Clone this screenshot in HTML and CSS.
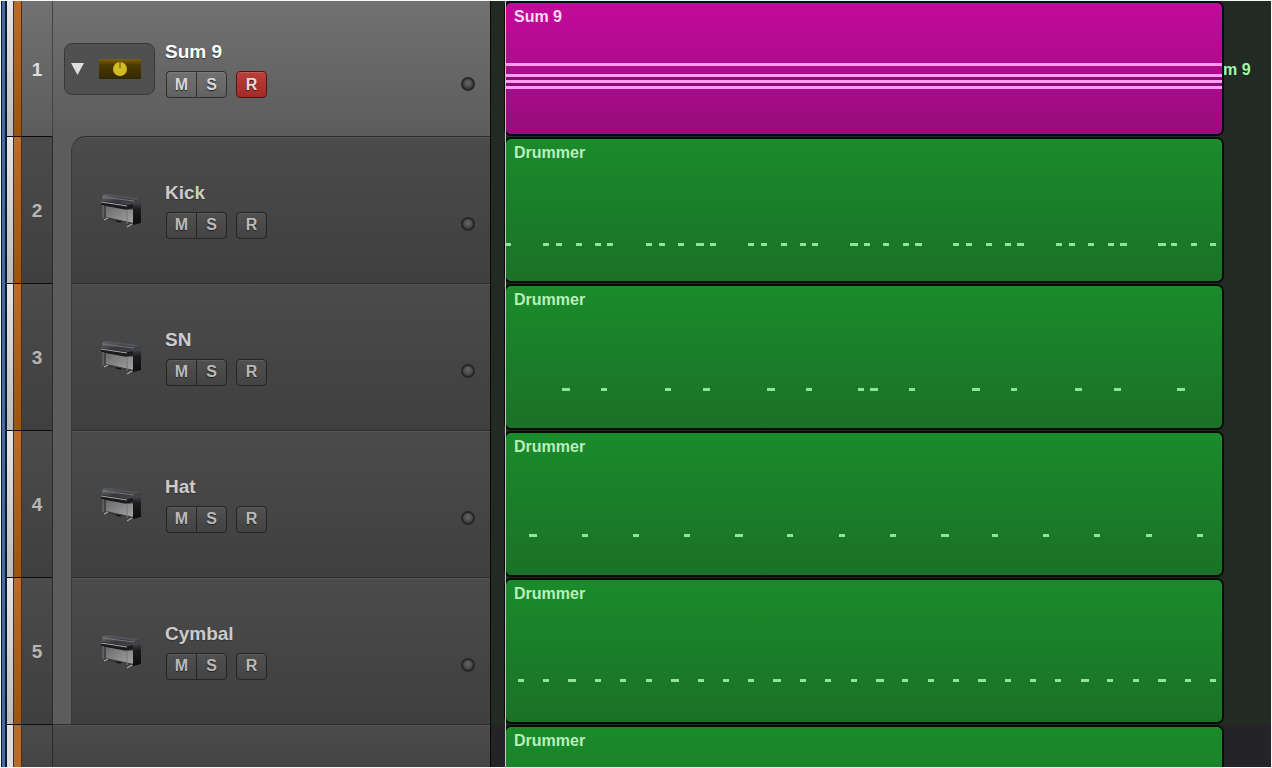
FILE: index.html
```html
<!DOCTYPE html>
<html lang="en">
<head>
<meta charset="utf-8">
<title>Tracks</title>
<link rel="stylesheet" href="styles.css">
</head>
<body>
<svg class="defs" aria-hidden="true">
  <defs>
    <linearGradient id="panel" x1="0" y1="0" x2="1" y2="1">
      <stop offset="0" stop-color="#6a6a6c"/><stop offset="1" stop-color="#a8a8a8"/>
    </linearGradient>
    <linearGradient id="lid" x1="0" y1="0" x2="1" y2="1">
      <stop offset="0" stop-color="#77787c"/><stop offset=".5" stop-color="#36373a"/><stop offset="1" stop-color="#4a4b50"/>
    </linearGradient>
    <linearGradient id="side" x1="0" y1="0" x2="0" y2="1">
      <stop offset="0" stop-color="#4a4b52"/><stop offset=".35" stop-color="#1c1c1f"/><stop offset="1" stop-color="#0c0c0d"/>
    </linearGradient>
    <symbol id="piano" viewBox="0 0 44 36">
      <path d="M7 13L35 17V32L7 25Z" fill="url(#panel)"/>
      <path d="M7 24L35 30V32L7 26Z" fill="#39393b"/>
      <path d="M34 12L42 8V30L34 32Z" fill="url(#side)"/>
      <path d="M4 2L8 1L42 5V9L34 12L3 8Z" fill="url(#lid)"/>
      <path d="M4 2L8 1L42 5L36 7Z" fill="#515259"/>
      <path d="M3 4L35 8" stroke="#74757b" stroke-width="1"/>
      <path d="M2 8L29 12L34 11V15L28 17L2 12Z" fill="#1b1b1d"/>
      <path d="M2 9L28 13" stroke="#a9a9ab" stroke-width="1"/>
      <path d="M4 12V25M28 16V31" stroke="#777779" stroke-width="1"/>
      <path d="M5 27L9 25M28 34L33 31" stroke="#a4a4a4" stroke-width="1.2"/>
      <path d="M17 28L22 29" stroke="#151515" stroke-width="1.5"/>
    </symbol>
  </defs>
</svg>
<main class="window">
  <div class="edge"></div>
  <div class="tracks">

    <section class="track track-sum">
      <div class="header">
        <i class="mark"></i><i class="colour"></i><span class="number">1</span>
        <div class="body">
          <div class="stack">
            <button class="disclose" aria-label="Collapse stack"><svg width="13" height="12" viewBox="0 0 13 12"><path d="M0 0H13L6.500 12Z" fill="#dedede"/></svg></button>
            <svg width="42" height="20" viewBox="0 0 42 20"><defs><linearGradient id="amber" x1="0" y1="0" x2="0" y2="1"><stop offset="0" stop-color="#806000"/><stop offset=".3" stop-color="#4c3a00"/><stop offset="1" stop-color="#352900"/></linearGradient></defs><rect width="42" height="20" fill="url(#amber)"/><circle cx="21" cy="10" r="7" fill="#d3bc22"/><path d="M21 3V9" stroke="#5d4a00" stroke-width="1"/></svg>
          </div>
          <div class="info">
            <div class="name">Sum 9</div>
            <div class="controls"><span class="pair"><button>M</button><button>S</button></span><button class="rec armed">R</button><i class="led"></i></div>
          </div>
        </div>
      </div>
      <div class="lane">
        <div class="region magenta"><svg class="notes" viewBox="0 0 716 131" preserveAspectRatio="none"><rect y="73" width="716" height="12" fill="#8c0b74"/><path d="M0 61.5H716M0 72.5H716M0 78.5H716M0 84.5H716" stroke="#ff9df0" stroke-width="3"/></svg><span class="label">Sum 9</span></div>
        <div class="tail">m 9</div>
      </div>
    </section>

    <section class="track child first">
      <div class="header">
        <i class="mark"></i><i class="colour"></i><span class="number">2</span>
        <div class="body">
          <div class="instrument"><svg width="44" height="36"><use href="#piano"/></svg></div>
          <div class="info">
            <div class="name">Kick</div>
            <div class="controls"><span class="pair"><button>M</button><button>S</button></span><button class="rec">R</button><i class="led"></i></div>
          </div>
        </div>
      </div>
      <div class="lane">
        <div class="region"><svg class="notes" viewBox="0 0 716 142" preserveAspectRatio="none" data-y="104" data-notes="0:5 37 50 70 89 101 140 153 172 190:8 204 242 255 275 294 306 344:8 358 377 397 409:7 447 460 480 499 511:7 550 563 582 602 614:7 652:8 665 685 704"></svg><span class="label">Drummer</span></div>
        <div class="tail"></div>
      </div>
    </section>

    <section class="track child">
      <div class="header">
        <i class="mark"></i><i class="colour"></i><span class="number">3</span>
        <div class="body">
          <div class="instrument"><svg width="44" height="36"><use href="#piano"/></svg></div>
          <div class="info">
            <div class="name">SN</div>
            <div class="controls"><span class="pair"><button>M</button><button>S</button></span><button class="rec">R</button><i class="led"></i></div>
          </div>
        </div>
      </div>
      <div class="lane">
        <div class="region"><svg class="notes" viewBox="0 0 716 142" preserveAspectRatio="none" data-y="102" data-notes="56:8 95 159 197:7 261:8 300 352 364:8 403 466:8 505 569:7 608:7 671:8"></svg><span class="label">Drummer</span></div>
        <div class="tail"></div>
      </div>
    </section>

    <section class="track child">
      <div class="header">
        <i class="mark"></i><i class="colour"></i><span class="number">4</span>
        <div class="body">
          <div class="instrument"><svg width="44" height="36"><use href="#piano"/></svg></div>
          <div class="info">
            <div class="name">Hat</div>
            <div class="controls"><span class="pair"><button>M</button><button>S</button></span><button class="rec">R</button><i class="led"></i></div>
          </div>
        </div>
      </div>
      <div class="lane">
        <div class="region"><svg class="notes" viewBox="0 0 716 142" preserveAspectRatio="none" data-y="101" data-notes="23:8 76 127 178 229:8 281 333 384 435:8 486 537 588 640 691"></svg><span class="label">Drummer</span></div>
        <div class="tail"></div>
      </div>
    </section>

    <section class="track child">
      <div class="header">
        <i class="mark"></i><i class="colour"></i><span class="number">5</span>
        <div class="body">
          <div class="instrument"><svg width="44" height="36"><use href="#piano"/></svg></div>
          <div class="info">
            <div class="name">Cymbal</div>
            <div class="controls"><span class="pair"><button>M</button><button>S</button></span><button class="rec">R</button><i class="led"></i></div>
          </div>
        </div>
      </div>
      <div class="lane">
        <div class="region"><svg class="notes" viewBox="0 0 716 142" preserveAspectRatio="none" data-y="99" data-notes="12 37 62:8 89 114 140 165:8 192 217 242 267:8 294 319 345 370:8 396 422 447 472:8 499 524 549 575:8 601 627 652:8 679 704"></svg><span class="label">Drummer</span></div>
        <div class="tail"></div>
      </div>
    </section>

    <section class="track partial">
      <div class="header">
        <i class="mark"></i><i class="colour"></i><span class="number"></span>
        <div class="body"></div>
      </div>
      <div class="lane">
        <div class="region"><span class="label">Drummer</span></div>
        <div class="tail"></div>
      </div>
    </section>

  </div>
</main>
<script src="notes.js"></script>
</body>
</html>
```

FILE: styles.css
```css
* { box-sizing: border-box; }

body {
  margin: 0;
  background: #fff;
  font-family: "Liberation Sans", Arial, sans-serif;
  font-weight: bold;
}

.defs { position: absolute; width: 0; height: 0; }

.window {
  display: flex;
  min-height: 100vh;
  border: 1px solid #f4f6f8;
  background: #212b24;
}

.edge {
  width: 6px;
  background: #466c9f;
  border: solid #0d1a33;
  border-width: 0 2px 0 1px;
}

.tracks { flex: 1; display: flex; flex-direction: column; min-width: 0; }

.track { display: flex; min-height: 147px; }
.track-sum { min-height: 136px; }
.partial { flex: 1; min-height: 42px; }

/* Track header */
.header {
  display: flex;
  width: 484px;
  flex: none;
  border-right: 1px solid #080808;
  background: linear-gradient(#4b4b4b, #3f3f3f);
}
.track-sum .header { background: linear-gradient(#717171, #5c5c5c); }
.child .header { background: #5c5c5c; }
.partial .header { background: linear-gradient(#4b4b4b, #444); }

.mark, .colour, .number { flex: none; border-bottom: 1px solid #0c0c0c; }
.mark { width: 7px; background: linear-gradient(#e6e6e6, #bcbcbc); border-right: 1px solid #333; }
.colour { width: 8px; background: linear-gradient(#c06b27, #9d5309); border-right: 1px solid #4b3018; }
.partial .mark { background: #dedede; border-bottom: 0; }
.partial .colour { background: #bd6a27; border-bottom: 0; }

.number {
  display: flex;
  align-items: center;
  justify-content: center;
  width: 31px;
  padding-top: 2px;
  border-right: 1px solid #2b2b2b;
  color: #b6b6b6;
  font-size: 19px;
}
.track-sum .number { color: #dedede; border-right-color: #444; }
.child .number { background: linear-gradient(#4b4b4b, #3f3f3f); }
.partial .number { border-bottom: 0; }

.body {
  flex: 1;
  display: flex;
  align-items: center;
  gap: 10px;
  padding: 0 15px 0 11px;
}
.child .body {
  margin: -1px 0 0 18px;
  padding: 0 15px 2px 0;
  border-top: 1px solid #2c2c2c;
  border-left: 1px solid #3a3a3a;
  background: linear-gradient(#4b4b4b, #3f3f3f);
  box-shadow: inset 0 1px #555;
}
.first .body { border-top-left-radius: 15px; }
.partial .body {
  margin-top: -1px;
  border-top: 1px solid #2c2c2c;
  box-shadow: inset 0 1px #555;
}

.stack {
  display: flex;
  align-items: center;
  gap: 15px;
  width: 91px;
  height: 52px;
  padding: 0 7px 0 6px;
  border: 1px solid #383838;
  border-radius: 8px;
  background: #505050;
}
.disclose { display: flex; padding: 0; border: 0; background: none; }

.instrument { display: flex; justify-content: flex-end; width: 83px; padding: 2px 12px 0 0; }

.info { flex: 1; display: flex; flex-direction: column; gap: 7px; }
.name { color: #cbcbcb; font-size: 19px; line-height: 24px; text-shadow: 0 1px 1px #333; }
.track-sum .name { color: #fff; }

.controls { display: flex; align-items: center; padding-left: 1px; }
.pair { display: flex; margin-right: 9px; }
.controls button {
  width: 31px;
  height: 27px;
  padding: 0;
  border: 1px solid #242424;
  border-radius: 4px;
  background: linear-gradient(#505050, #434343);
  box-shadow: inset 0 1px #5c5c5c;
  color: #b9b9b9;
  font: bold 16px "Liberation Sans", Arial, sans-serif;
  text-shadow: 0 1px 1px #222;
}
.pair button:first-child { border-radius: 4px 0 0 4px; border-right: 0; width: 30px; }
.pair button:last-child { border-radius: 0 4px 4px 0; }
.track-sum .controls button {
  border-color: #303030;
  background: linear-gradient(#717171, #616161);
  box-shadow: inset 0 1px #7c7c7c;
  color: #d8d8d8;
}
.track-sum .controls .armed {
  border-color: #4c1614;
  background: linear-gradient(#b9403b, #a32b27);
  box-shadow: inset 0 1px #c55954;
  color: #f2d8d6;
}

.led {
  width: 14px;
  height: 14px;
  margin: 0 0 2px auto;
  border: 2px solid #272727;
  border-radius: 50%;
  background: radial-gradient(circle at 50% 40%, #666, #303030);
}

/* Timeline */
.lane {
  flex: 1;
  display: flex;
  min-width: 0;
  padding: 2px 0 3px 14px;
  background: #212b24;
}
.partial .lane { padding-bottom: 0; background: #242325; }
.lane::before {
  content: "";
  z-index: 1;
  width: 1px;
  margin: -2px 0 -3px;
  background: #c4c8c4;
}

.region {
  position: relative;
  flex: 1;
  padding: 4px 8px;
  border-radius: 5px;
  background: linear-gradient(#1a8b2b, #1b7127);
  box-shadow: 0 0 0 2px #070b08;
  color: #b9efbd;
  font-size: 16px;
  line-height: 20px;
}
.magenta { background: linear-gradient(#c30a9b, #970c7d); color: #ffd9f8; }
.partial .region { border-radius: 5px 5px 0 0; background: linear-gradient(#1a8b2b, #1a8329); box-shadow: 0 -2px #070b08, 2px 0 #070b08; }

.notes { position: absolute; inset: 0; width: 100%; height: 100%; fill: #8fe39a; }
.label { position: relative; }

.tail {
  display: flex;
  align-items: center;
  width: 49px;
  padding: 2px 0 0 1px;
  color: #a0f8a8;
  font-size: 16px;
}
```

FILE: notes.js
```js
// Each entry is "x" or "x:width"; the usual note is 6 units wide.
document.querySelectorAll(".notes[data-notes]").forEach((svg) => {
  svg.dataset.notes.split(" ").forEach((entry) => {
    const [x, width = 6] = entry.split(":");
    const note = document.createElementNS("http://www.w3.org/2000/svg", "rect");
    note.setAttribute("x", x);
    note.setAttribute("y", svg.dataset.y);
    note.setAttribute("width", width);
    note.setAttribute("height", 3);
    svg.append(note);
  });
});
```
